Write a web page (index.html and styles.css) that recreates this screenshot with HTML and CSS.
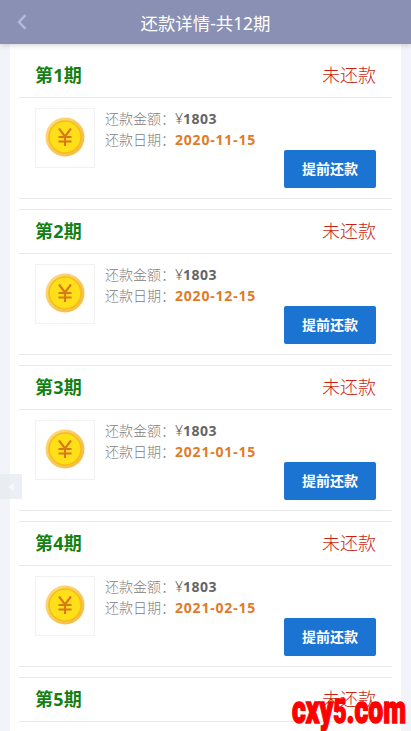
FILE: index.html
```html
<!DOCTYPE html>
<html lang="zh-CN">
<head>
<meta charset="utf-8">
<title>还款详情</title>
<link rel="stylesheet" href="styles.css">
</head>
<body>
<svg class="defs" aria-hidden="true">
  <defs>
    <linearGradient id="rim" x1="0" y1="0" x2="1" y2="1"><stop offset="0" stop-color="#ffdc80"/><stop offset="1" stop-color="#f3b83a"/></linearGradient>
    <symbol id="coin" viewBox="0 0 40 40">
      <circle cx="20" cy="20" r="19.5" fill="url(#rim)"/>
      <circle cx="20" cy="20" r="16" fill="#ffdf18" stroke="#f3bd1c" stroke-width="1.5"/>
      <path d="M14 11.5l6 8 6-8M20 19.5v9.5M13.5 20h13M13.5 24.5h13" fill="none" stroke="#d87918" stroke-width="2.1"/>
    </symbol>
  </defs>
</svg>
<header class="bar">
  <svg class="back" viewBox="0 0 10 16"><path d="M8.5 1.2L2 8l6.5 6.8"/></svg>
  <h1>还款详情-共12期</h1>
</header>
<main class="panel">
  <section class="card first">
    <div class="head"><b>第1期</b><span>未还款</span></div>
    <div class="body"><div class="pic"><svg><use href="#coin"/></svg></div>
      <div class="info"><p>还款金额：<span class="sum">¥<b>1803</b></span></p><p>还款日期：<b class="date">2020-11-15</b></p></div>
      <button>提前还款</button></div>
  </section>
  <section class="card">
    <div class="head"><b>第2期</b><span>未还款</span></div>
    <div class="body"><div class="pic"><svg><use href="#coin"/></svg></div>
      <div class="info"><p>还款金额：<span class="sum">¥<b>1803</b></span></p><p>还款日期：<b class="date">2020-12-15</b></p></div>
      <button>提前还款</button></div>
  </section>
  <section class="card">
    <div class="head"><b>第3期</b><span>未还款</span></div>
    <div class="body"><div class="pic"><svg><use href="#coin"/></svg></div>
      <div class="info"><p>还款金额：<span class="sum">¥<b>1803</b></span></p><p>还款日期：<b class="date">2021-01-15</b></p></div>
      <button>提前还款</button></div>
  </section>
  <section class="card">
    <div class="head"><b>第4期</b><span>未还款</span></div>
    <div class="body"><div class="pic"><svg><use href="#coin"/></svg></div>
      <div class="info"><p>还款金额：<span class="sum">¥<b>1803</b></span></p><p>还款日期：<b class="date">2021-02-15</b></p></div>
      <button>提前还款</button></div>
  </section>
  <section class="card">
    <div class="head"><b>第5期</b><span>未还款</span></div>
    <div class="body"></div>
  </section>
</main>
<div class="handle"><svg viewBox="0 0 8 10"><path d="M7 1L1 5l6 4z"/></svg></div>
<svg class="mark" viewBox="0 0 119 41"><text x="2" y="32.5" textLength="114" lengthAdjust="spacingAndGlyphs">cxy<tspan class="digit">5</tspan>.com</text></svg>
</body>
</html>
```
FILE: styles.css
```css
* { box-sizing: border-box; margin: 0; padding: 0; }
body {
  height: 731px;
  overflow: hidden;
  position: relative;
  background: #f3f4f9;
  font-family: "Noto Sans", "Noto Sans CJK SC", sans-serif;
}
.defs { position: absolute; width: 0; height: 0; }
.bar {
  position: relative;
  z-index: 1;
  height: 44px;
  display: flex;
  align-items: center;
  justify-content: center;
  background: #8990b4;
  box-shadow: 0 1px 5px rgba(60, 70, 90, .25);
}
.bar h1 { padding-top: 2px; font-size: 17.4px; font-weight: 400; line-height: 42px; color: #fff; white-space: nowrap; }
.back { position: absolute; left: 17px; top: 14px; width: 10px; height: 16px; }
.back path { fill: none; stroke: #b3bad8; stroke-width: 2.4; }
.panel { margin: 0 10px; padding: 9px 9px 0; height: 687px; overflow: hidden; background: #fff; }
.card {
  height: 146px;
  margin-bottom: 10px;
  border-top: 1px solid #e7e9eb;
  border-bottom: 1px solid #e7e9eb;
}
.first { border-top-color: transparent; }
.head {
  height: 43px;
  padding: 0 16px;
  display: flex;
  justify-content: space-between;
  align-items: flex-start;
  font-size: 18px;
  line-height: 42px;
}
.head b { color: #138013; letter-spacing: .2px; }
.head span { color: #c81e14; font-weight: 300; }
.body {
  height: 101px;
  padding: 10px 16px 0;
  display: flex;
  border-top: 1px solid #e7e9eb;
}
.pic {
  width: 60px;
  height: 60px;
  flex: none;
  display: flex;
  align-items: center;
  justify-content: center;
  padding-bottom: 2px;
  border: 1px solid #f1f1f1;
}
.pic svg { width: 40px; height: 40px; }
.info { margin-left: 10px; width: 179px; flex: none; font-size: 14px; line-height: 21px; color: #808080; white-space: nowrap; }
.info p { height: 21px; font-weight: 300; }
.info b { font-weight: 700; letter-spacing: .5px; }
.sum { color: #666; }
.info .date { color: #e17b27; letter-spacing: .8px; }
button {
  width: 92px;
  height: 38px;
  flex: none;
  margin-top: 42px;
  border: 0;
  border-radius: 2px;
  background: #1b74d2;
  color: #fff;
  font: 700 14px/38px "Noto Sans", "Noto Sans CJK SC", sans-serif;
}
.handle {
  position: absolute;
  left: 0;
  top: 474px;
  width: 22px;
  height: 25px;
  display: flex;
  align-items: center;
  justify-content: center;
  background: rgba(228, 232, 238, .7);
}
.handle svg { width: 8px; height: 10px; fill: #f6f8fc; }
.mark { position: absolute; left: 290px; top: 690px; width: 119px; height: 41px; z-index: 2; }
.mark text { font: 900 38px Roboto, sans-serif; fill: #f00; stroke: #f00; stroke-width: 1.5; }
.mark .digit { font-size: 33px; }
```
